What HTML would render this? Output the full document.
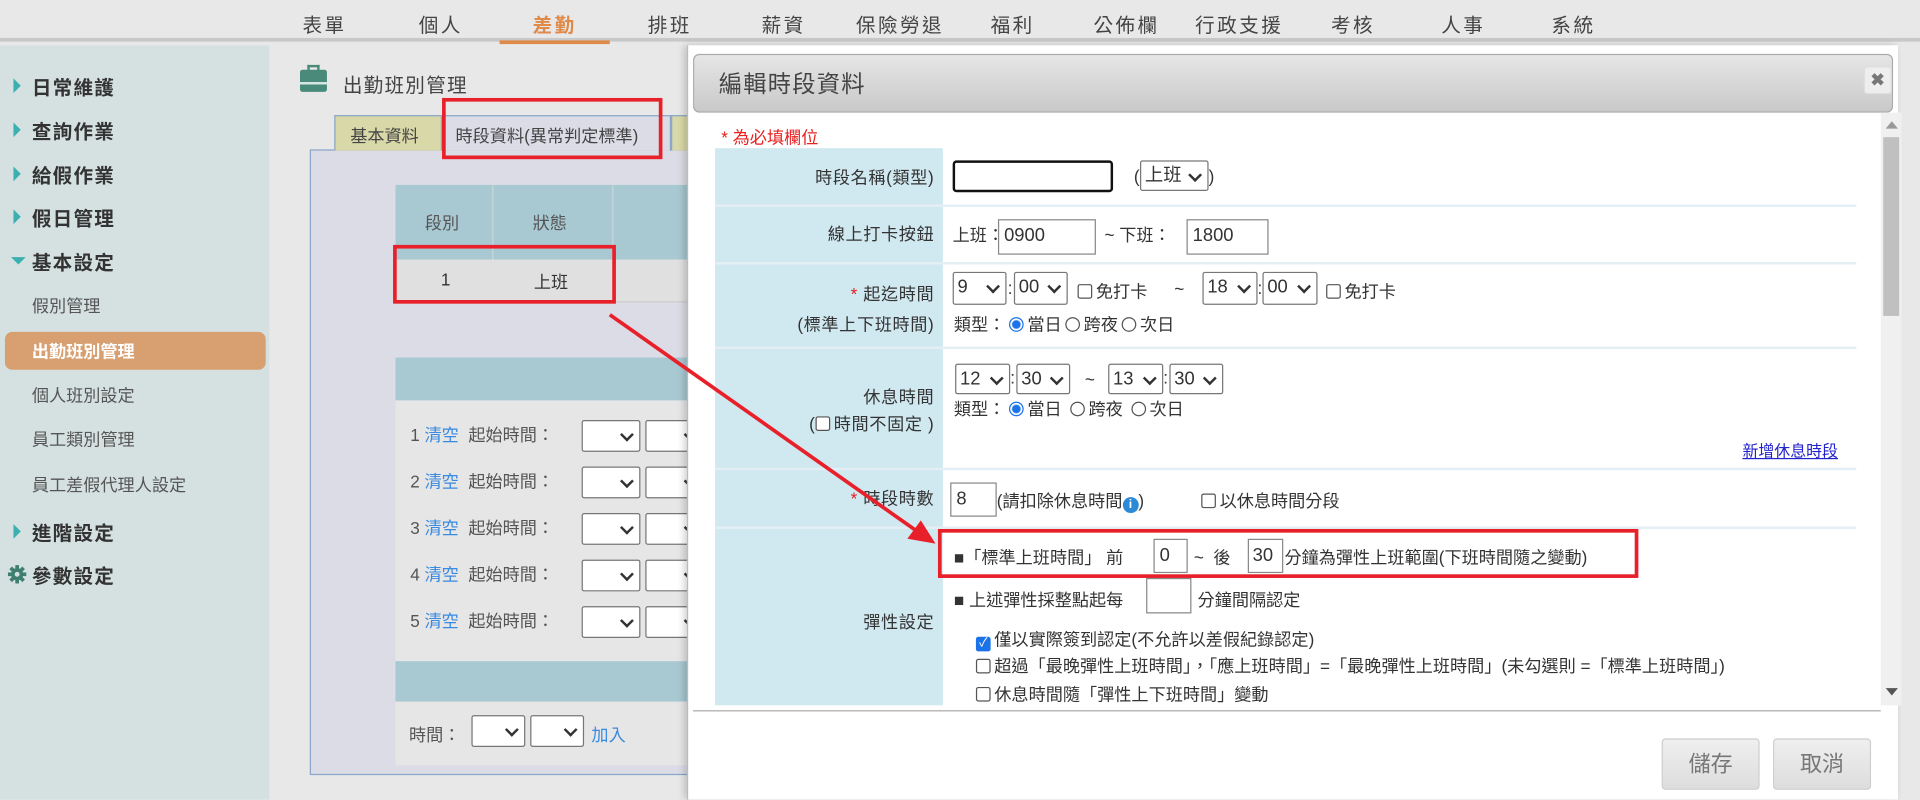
<!DOCTYPE html>
<html><head><meta charset="utf-8"><style>
*{box-sizing:border-box;margin:0;padding:0}
html,body{width:1920px;height:800px;overflow:hidden;background:#e8e8e8}
body{font-family:"Liberation Sans","Noto Sans CJK TC",sans-serif;color:#444}
#w{position:absolute;left:0;top:0;width:1568px;height:653px;transform:scale(1.22449);transform-origin:0 0;background:#e8e8e8}
.a{position:absolute;white-space:nowrap}
.nav{left:0;top:0;width:1568px;height:34px;background:#e8e8e8;border-bottom:3px solid #c8c8c8}
.nv{top:7px;font-size:16px;color:#444;letter-spacing:2px;transform:translateX(-50%)}
.side{left:0;top:37px;width:220px;height:616px;background:#d5e1e1}
.si{left:26px;font-size:16px;font-weight:bold;color:#333;letter-spacing:1px;transform:translateY(-50%)}
.tri{position:absolute;left:-15px;top:50%;margin-top:-6px;border-left:6px solid #3ab0b0;border-top:6px solid transparent;border-bottom:6px solid transparent}
.sub{left:26px;font-size:14px;color:#555;transform:translateY(-50%)}
.sel{position:absolute;border:1px solid #777;border-radius:2px;background:#fff;font-size:15px;color:#333;padding-left:3px;line-height:24px;height:26px}
.sel:after{content:"";position:absolute;right:6px;top:7px;width:6px;height:6px;border-right:2px solid #333;border-bottom:2px solid #333;transform:rotate(45deg)}
.inp{position:absolute;border:1px solid #888;background:#fff;font-size:15px;color:#333;padding-left:4px;line-height:26px;height:28px}
.t{font-size:14px;color:#333}
.lbl{position:absolute;left:584px;width:186px;background:#d0e8f0}
.lt{right:805px;font-size:14px;color:#333;transform:translateY(-50%);text-align:right;letter-spacing:.5px}
.cb{display:inline-block;width:12px;height:12px;border:1px solid #555;border-radius:2px;vertical-align:-1px;margin-right:3px;background:#fff}
.rd{display:inline-block;width:12px;height:12px;border:1px solid #555;border-radius:50%;vertical-align:-1px;margin:0 3px;background:#fff}
.rd.on{border:1px solid #1a73e8;background:radial-gradient(#1a73e8 3px,#fff 4px)}
.red{position:absolute;border:3px solid #e8202a}
.sep{position:absolute;left:584px;width:932px;height:2px;background:#e3eff4}
.btn{position:absolute;top:603px;width:80px;height:42px;border:1px solid #ccc;border-radius:3px;background:linear-gradient(#efefef,#ddd);font-size:18px;color:#777;text-align:center;line-height:40px}
</style></head><body><div id="w">
<div class="a nav"></div>
<div style="position:absolute;left:408px;top:33px;width:90px;height:3px;background:#e08a4a"></div>
<div class="a nv" style="left:265px">表單</div><div class="a nv" style="left:360px">個人</div><div class="a nv" style="left:453px;color:#e08a4a;font-weight:bold">差勤</div><div class="a nv" style="left:547px">排班</div><div class="a nv" style="left:640px">薪資</div><div class="a nv" style="left:735px">保險勞退</div><div class="a nv" style="left:827px">福利</div><div class="a nv" style="left:920px">公佈欄</div><div class="a nv" style="left:1012px">行政支援</div><div class="a nv" style="left:1105px">考核</div><div class="a nv" style="left:1195px">人事</div><div class="a nv" style="left:1285px">系統</div>

<div class="a side"></div>
<div class="a si" style="top:70px"><i class="tri"></i>日常維護</div>
<div class="a si" style="top:106px"><i class="tri"></i>查詢作業</div>
<div class="a si" style="top:142px"><i class="tri"></i>給假作業</div>
<div class="a si" style="top:177px"><i class="tri"></i>假日管理</div>
<div class="a si" style="top:213px"><i class="tri" style="left:-17px;margin-top:-3px;border-top:6px solid #3ab0b0;border-left:6px solid transparent;border-right:6px solid transparent;border-bottom:0"></i>基本設定</div>
<div class="a sub" style="top:250px">假別管理</div>
<div class="a" style="left:4px;top:271px;width:213px;height:31px;background:#d8a070;border-radius:6px"></div>
<div class="a sub" style="top:287px;color:#fff;font-weight:bold">出勤班別管理</div>
<div class="a sub" style="top:323px">個人班別設定</div>
<div class="a sub" style="top:359px">員工類別管理</div>
<div class="a sub" style="top:396px">員工差假代理人設定</div>
<div class="a si" style="top:434px"><i class="tri"></i>進階設定</div>
<svg class="a" style="left:6px;top:461px" width="16" height="16" viewBox="0 0 16 16"><g fill="#3f7f70"><circle cx="8" cy="8" r="5"/><rect x="6.5" y="0.5" width="3" height="15"/><rect x="0.5" y="6.5" width="15" height="3"/><rect x="6.5" y="0.5" width="3" height="15" transform="rotate(45 8 8)"/><rect x="6.5" y="0.5" width="3" height="15" transform="rotate(-45 8 8)"/></g><circle cx="8" cy="8" r="2" fill="#d5e1e1"/></svg>
<div class="a si" style="top:469px">參數設定</div>

<div class="a" style="left:245px;top:57px;width:22px;height:18px;background:#4a8a7a;border-radius:2px"></div>
<div class="a" style="left:251px;top:53px;width:10px;height:5px;border:2px solid #4a8a7a;border-bottom:0"></div>
<div class="a" style="left:245px;top:67px;width:22px;height:2px;background:#d8e8e4"></div>
<div class="a" style="left:280px;top:56px;font-size:16px;color:#444;letter-spacing:1px">出勤班別管理</div>

<div class="a" style="left:253px;top:122px;width:320px;height:511px;background:#dcdce6;border:1px solid #8aa6c8"></div>
<div class="a" style="left:273px;top:94px;width:88px;height:29px;background:#d8d8a8;border:1px solid #8aa6c8;border-bottom:0;font-size:14px;padding:6px 0 0 12px">基本資料</div>
<div class="a" style="left:361px;top:94px;width:187px;height:29px;background:#dcdce6;border:1px solid #8aa6c8;border-bottom:0;font-size:14px;padding:6px 0 0 10px">時段資料(異常判定標準)</div>
<div class="a" style="left:548px;top:94px;width:20px;height:29px;background:#d8d8a8;border:1px solid #8aa6c8;border-bottom:0"></div>
<div class="red" style="left:361px;top:80px;width:180px;height:50px"></div>

<div class="a" style="left:323px;top:151px;width:250px;height:61px;background:#a8c8d2"></div>
<div class="a" style="left:402px;top:151px;width:1px;height:96px;background:#c8d8dc"></div>
<div class="a" style="left:500px;top:151px;width:1px;height:96px;background:#c8d8dc"></div>
<div class="a t" style="left:347px;top:172px;color:#555">段別</div>
<div class="a t" style="left:435px;top:172px;color:#555">狀態</div>
<div class="a" style="left:323px;top:212px;width:250px;height:35px;background:#e0e0e0;border-bottom:1px solid #ccc"></div>
<div class="a t" style="left:360px;top:220px">1</div>
<div class="a t" style="left:436px;top:220px">上班</div>
<div class="red" style="left:321px;top:200px;width:182px;height:48px"></div>

<div class="a" style="left:323px;top:292px;width:250px;height:35px;background:#a8c8d2"></div>
<div class="a" style="left:323px;top:327px;width:250px;height:213px;background:#e6e6e6"></div>
<div class="a" style="left:323px;top:540px;width:250px;height:33px;background:#a8c8d2"></div>
<div class="a" style="left:323px;top:573px;width:250px;height:52px;background:#e6e6e6"></div>
<div class="a t" style="left:335px;top:346px;line-height:18px;color:#555">1 <span style="color:#3a8ae0">清空</span> &nbsp;起始時間：</div>
<div class="a t" style="left:335px;top:384px;line-height:18px;color:#555">2 <span style="color:#3a8ae0">清空</span> &nbsp;起始時間：</div>
<div class="a t" style="left:335px;top:422px;line-height:18px;color:#555">3 <span style="color:#3a8ae0">清空</span> &nbsp;起始時間：</div>
<div class="a t" style="left:335px;top:460px;line-height:18px;color:#555">4 <span style="color:#3a8ae0">清空</span> &nbsp;起始時間：</div>
<div class="a t" style="left:335px;top:498px;line-height:18px;color:#555">5 <span style="color:#3a8ae0">清空</span> &nbsp;起始時間：</div>
<div class="sel" style="left:475px;top:343px;width:48px"></div><div class="sel" style="left:527px;top:343px;width:48px"></div>
<div class="sel" style="left:475px;top:381px;width:48px"></div><div class="sel" style="left:527px;top:381px;width:48px"></div>
<div class="sel" style="left:475px;top:419px;width:48px"></div><div class="sel" style="left:527px;top:419px;width:48px"></div>
<div class="sel" style="left:475px;top:457px;width:48px"></div><div class="sel" style="left:527px;top:457px;width:48px"></div>
<div class="sel" style="left:475px;top:495px;width:48px"></div><div class="sel" style="left:527px;top:495px;width:48px"></div>
<div class="a t" style="left:334px;top:590px;color:#555">時間：</div>
<div class="sel" style="left:385px;top:584px;width:44px"></div><div class="sel" style="left:433px;top:584px;width:44px"></div>
<div class="a t" style="left:483px;top:590px;color:#3a8ae0">加入</div>

<!-- modal -->
<div class="a" style="left:561px;top:37px;width:989px;height:616px;background:#fff;border-left:1px solid #bbb;box-shadow:-2px 0 6px rgba(0,0,0,.2)"></div>
<div class="a" style="left:566px;top:44px;width:980px;height:48px;background:linear-gradient(#e6e6e6,#c9c9c9);border:1px solid #aaa;border-radius:5px"></div>
<div class="a" style="left:587px;top:54px;font-size:19px;color:#444;letter-spacing:1px">編輯時段資料</div>
<div class="a" style="left:1522px;top:54px;width:23px;height:23px;background:#eee;border:1px solid #ddd;border-radius:3px;font-size:14px;font-weight:bold;color:#777;text-align:center;line-height:21px">✖</div>
<div class="a" style="left:1536px;top:92px;width:17px;height:484px;background:#f0f0f0"></div>
<div class="a" style="left:1538px;top:112px;width:13px;height:146px;background:#c0c0c0"></div>
<div class="a" style="left:1540px;top:99px;border-bottom:6px solid #999;border-left:5px solid transparent;border-right:5px solid transparent"></div>
<div class="a" style="left:1540px;top:562px;border-top:6px solid #555;border-left:5px solid transparent;border-right:5px solid transparent"></div>
<div class="a" style="left:566px;top:580px;width:970px;height:1px;background:#aaa"></div>
<div class="btn" style="left:1357px">儲存</div><div class="btn" style="left:1448px">取消</div>

<div class="a" style="left:589px;top:102px;font-size:14px;color:#e82020">* 為必填欄位</div>
<div class="lbl" style="top:121px;height:455px"></div>
<div class="sep" style="top:167px"></div><div class="sep" style="top:214px"></div><div class="sep" style="top:283px"></div><div class="sep" style="top:382px"></div><div class="sep" style="top:430px"></div>

<div class="a lt" style="top:145px">時段名稱(類型)</div>
<div class="a" style="left:778px;top:131px;width:131px;height:26px;border:2px solid #111;border-radius:3px"></div>
<div class="a t" style="left:926px;top:136px">(</div>
<div class="sel" style="left:931px;top:131px;width:56px;height:25px">上班</div>
<div class="a t" style="left:987px;top:136px">)</div>

<div class="a lt" style="top:191px">線上打卡按鈕</div>
<div class="a t" style="left:778px;top:182px">上班：</div>
<div class="inp" style="left:815px;top:179px;width:80px;height:29px">0900</div>
<div class="a t" style="left:902px;top:182px">~ 下班：</div>
<div class="inp" style="left:969px;top:179px;width:67px;height:29px">1800</div>

<div class="a lt" style="top:240px"><span style="color:#e82020">*</span> 起迄時間</div>
<div class="a lt" style="top:265px">(標準上下班時間)</div>
<div class="sel" style="left:778px;top:222px;width:44px;height:27px">9</div><span class="a t" style="left:823px;top:227px">:</span>
<div class="sel" style="left:828px;top:222px;width:44px;height:27px">00</div>
<div class="a t" style="left:880px;top:228px"><i class="cb"></i>免打卡</div>
<div class="a t" style="left:959px;top:228px">~</div>
<div class="sel" style="left:982px;top:222px;width:45px;height:27px">18</div><span class="a t" style="left:1027px;top:227px">:</span>
<div class="sel" style="left:1031px;top:222px;width:45px;height:27px">00</div>
<div class="a t" style="left:1083px;top:228px"><i class="cb"></i>免打卡</div>
<div class="a t" style="left:779px;top:255px">類型：<i class="rd on"></i>當日<i class="rd"></i>跨夜<i class="rd"></i>次日</div>

<div class="a lt" style="top:324px">休息時間</div>
<div class="a lt" style="top:346px">(<i class="cb"></i>時間不固定 )</div>
<div class="sel" style="left:780px;top:297px;width:45px;height:25px">12</div><span class="a t" style="left:825px;top:300px">:</span>
<div class="sel" style="left:830px;top:297px;width:44px;height:25px">30</div>
<div class="a t" style="left:886px;top:302px">~</div>
<div class="sel" style="left:905px;top:297px;width:45px;height:25px">13</div><span class="a t" style="left:950px;top:300px">:</span>
<div class="sel" style="left:955px;top:297px;width:44px;height:25px">30</div>
<div class="a t" style="left:779px;top:324px">類型：<i class="rd on"></i>當日 <i class="rd"></i>跨夜 <i class="rd"></i>次日</div>
<div class="a" style="left:1423px;top:358px;font-size:13px;color:#2222cc;text-decoration:underline">新增休息時段</div>

<div class="a lt" style="top:407px"><span style="color:#e82020">*</span> 時段時數</div>
<div class="inp" style="left:776px;top:394px;width:38px;height:28px">8</div>
<div class="a t" style="left:814px;top:399px">(請扣除休息時間<span style="display:inline-block;width:13px;height:13px;border-radius:50%;background:#2a8ad8;color:#fff;font-size:10px;font-weight:bold;text-align:center;line-height:13px;vertical-align:-1px">i</span>)</div>
<div class="a t" style="left:981px;top:399px"><i class="cb"></i>以休息時間分段</div>

<div class="a lt" style="top:508px">彈性設定</div>
<div class="a t" style="left:779px;top:445px">■「標準上班時間」 前</div>
<div class="inp" style="left:942px;top:440px;width:28px;height:28px">0</div>
<div class="a t" style="left:975px;top:445px">~ &nbsp;後</div>
<div class="inp" style="left:1019px;top:440px;width:29px;height:28px;padding-left:3px">30</div>
<div class="a t" style="left:1049px;top:445px">分鐘為彈性上班範圍(下班時間隨之變動)</div>
<div class="a t" style="left:779px;top:480px">■ 上述彈性採整點起每</div>
<div class="inp" style="left:936px;top:472px;width:37px;height:29px"></div>
<div class="a t" style="left:978px;top:480px">分鐘間隔認定</div>
<div class="a t" style="left:797px;top:512px"><i class="cb" style="background:#1a73e8;border-color:#1a73e8;color:#fff;font-size:10px;line-height:10px;text-align:center;font-style:normal">✓</i>僅以實際簽到認定(不允許以差假紀錄認定)</div>
<div class="a t" style="left:797px;top:534px"><i class="cb"></i>超過「最晚彈性上班時間」，「應上班時間」=「最晚彈性上班時間」(未勾選則 =「標準上班時間」)</div>
<div class="a t" style="left:797px;top:557px"><i class="cb"></i>休息時間隨「彈性上下班時間」變動</div>
<div class="red" style="left:766px;top:432px;width:572px;height:40px"></div>

<svg class="a" style="left:0;top:0" width="1568" height="653"><line x1="498" y1="257" x2="752" y2="436" stroke="#e8202a" stroke-width="3"/><polygon points="764,444 741,440 752,425" fill="#e8202a"/></svg>
</div></body></html>
